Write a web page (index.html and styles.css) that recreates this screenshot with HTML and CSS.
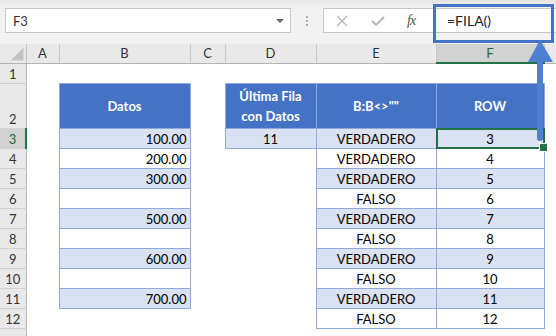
FILE: index.html
```html
<!DOCTYPE html>
<html lang="es">
<head>
    <meta charset="UTF-8">
    <title>FILA - Última fila con datos</title>
    <link rel="stylesheet" href="styles.css">
</head>
<body>
    <div class="app">
        <div class="formula-bar">
            <div class="name-box"><span>F3</span><span class="caret"></span></div>
            <div class="grip">
                <svg width="2" height="10" viewBox="0 0 2 10"><rect y="0" width="2" height="2" fill="#b0b0b0"/><rect y="4" width="2" height="2" fill="#b0b0b0"/><rect y="8" width="2" height="2" fill="#b0b0b0"/></svg>
            </div>
            <div class="fx-area">
                <div class="fx-buttons">
                    <svg class="icon" width="14" height="12" viewBox="0 0 14 12"><path d="M2 1 L12 11 M12 1 L2 11" stroke="#b4b4b4" stroke-width="1.3" fill="none"/></svg>
                    <svg class="icon" width="14" height="12" viewBox="0 0 14 12"><path d="M1 6 L5 10 L13 2" stroke="#b4b4b4" stroke-width="1.8" fill="none"/></svg>
                    <span class="fx">fx</span>
                </div>
                <div class="formula-input"><span>=FILA()</span></div>
            </div>
        </div>

        <table class="sheet">
            <colgroup>
                <col style="width:26px"><col style="width:33px"><col style="width:131px"><col style="width:35px">
                <col style="width:91px"><col style="width:120px"><col style="width:108px"><col style="width:60px">
            </colgroup>
            <tr class="hdr">
                <th class="corner"><span class="tri"></span></th>
                <th class="ch">A</th><th class="ch">B</th><th class="ch">C</th><th class="ch">D</th>
                <th class="ch">E</th><th class="ch on">F</th><th class="ch"></th>
            </tr>
            <tr><th class="rh">1</th><td></td><td></td><td></td><td></td><td></td><td></td><td></td></tr>
            <tr class="tall">
                <th class="rh">2</th><td></td>
                <td class="t th">Datos</td><td></td>
                <td class="t th">Última Fila<br>con Datos</td>
                <td class="t th">B:B&lt;&gt;""</td>
                <td class="t th">ROW</td><td></td>
            </tr>
            <tr>
                <th class="rh on">3</th><td></td>
                <td class="t band num">100.00</td><td></td>
                <td class="t band mid">11</td>
                <td class="t band mid">VERDADERO</td>
                <td class="t band mid sel">3</td><td></td>
            </tr>
            <tr><th class="rh">4</th><td></td><td class="t num">200.00</td><td></td><td></td><td class="t mid">VERDADERO</td><td class="t mid">4</td><td></td></tr>
            <tr><th class="rh">5</th><td></td><td class="t band num">300.00</td><td></td><td></td><td class="t band mid">VERDADERO</td><td class="t band mid">5</td><td></td></tr>
            <tr><th class="rh">6</th><td></td><td class="t num"></td><td></td><td></td><td class="t mid">FALSO</td><td class="t mid">6</td><td></td></tr>
            <tr><th class="rh">7</th><td></td><td class="t band num">500.00</td><td></td><td></td><td class="t band mid">VERDADERO</td><td class="t band mid">7</td><td></td></tr>
            <tr><th class="rh">8</th><td></td><td class="t num"></td><td></td><td></td><td class="t mid">FALSO</td><td class="t mid">8</td><td></td></tr>
            <tr><th class="rh">9</th><td></td><td class="t band num">600.00</td><td></td><td></td><td class="t band mid">VERDADERO</td><td class="t band mid">9</td><td></td></tr>
            <tr><th class="rh">10</th><td></td><td class="t num"></td><td></td><td></td><td class="t mid">FALSO</td><td class="t mid">10</td><td></td></tr>
            <tr><th class="rh">11</th><td></td><td class="t band num">700.00</td><td></td><td></td><td class="t band mid">VERDADERO</td><td class="t band mid">11</td><td></td></tr>
            <tr><th class="rh">12</th><td></td><td></td><td></td><td></td><td class="t mid">FALSO</td><td class="t mid">12</td><td></td></tr>
            <tr class="last"><th class="rh"></th><td></td><td></td><td></td><td></td><td></td><td></td><td></td></tr>
        </table>

        <!-- flecha que apunta a la barra de fórmulas -->
        <svg class="arrow" width="30" height="106" viewBox="0 0 30 106">
            <polygon points="14,2 2,24 27,24" fill="#4f7fcf"/>
            <path d="M11 23 H17 V100 Q17 103 14 103 Q11 103 11 100 Z" fill="#4f7fcf"/>
        </svg>
    </div>
</body>
</html>
```

FILE: styles.css
```css
* {
    box-sizing: border-box;
}
body {
    margin: 0;
    background: #fff;
    font-family: Lato, "Liberation Sans", sans-serif;
    color: #000;
}
.app {
    position: relative;
    width: 556px;
    height: 336px;
    overflow: hidden;
}

/* barra de fórmulas */
.formula-bar {
    height: 44px;
    display: flex;
    align-items: flex-start;
    padding: 8px 0 0 5px;
    background: linear-gradient(#e4e4e4 0, #f1f1f1 6px, #f1f1f1 100%);
}
.name-box {
    width: 286px;
    height: 25px;
    flex: none;
    display: flex;
    align-items: center;
    justify-content: space-between;
    padding: 0 6px 0 7px;
    background: #fff;
    border: 1px solid #c6c6c6;
    font-size: 13px;
    color: #333;
}
.caret {
    width: 0;
    height: 0;
    border-left: 4px solid transparent;
    border-right: 4px solid transparent;
    border-top: 4px solid #6a6a6a;
}
.grip {
    width: 32px;
    height: 25px;
    flex: none;
    display: flex;
    align-items: center;
    justify-content: center;
}
.fx-area {
    flex: 1;
    height: 25px;
    display: flex;
    background: #fff;
    border: 1px solid #c6c6c6;
    border-right: none;
}
.fx-buttons {
    width: 111px;
    flex: none;
    display: flex;
    align-items: center;
    gap: 22px;
    padding-left: 11px;
    border-right: 1px solid #d6d6d6;
}
.icon {
    display: block;
}
.fx {
    width: 14px;
    font-family: "Liberation Serif", serif;
    font-style: italic;
    font-size: 14px;
    color: #555;
    letter-spacing: -1px;
}
.formula-input {
    flex: 1;
    position: relative;
    display: flex;
    align-items: center;
    padding-left: 12px;
    font-size: 14px;
    color: #222;
}
.formula-input::after {
    content: "";
    position: absolute;
    left: -2px;
    top: -5px;
    width: 115px;
    height: 33px;
    border: 3px solid #4472c4;
}

/* hoja */
.sheet {
    table-layout: fixed;
    width: 604px;
    border-collapse: collapse;
    font-size: 13px;
}
.sheet tr {
    height: 20px;
}
.sheet tr.hdr {
    height: 19px;
}
.sheet tr.tall {
    height: 45px;
}
.sheet td,
.sheet th {
    padding: 0;
    white-space: nowrap;
    overflow: hidden;
}
.sheet .corner {
    position: relative;
    background: #e9e9e9;
    border-right: 1px solid #c4c4c4;
    border-bottom: 1px solid #b5b5b5;
}
.tri {
    position: absolute;
    right: 2px;
    bottom: 2px;
    width: 13px;
    height: 13px;
    background: #c3c3c3;
    clip-path: polygon(100% 0, 100% 100%, 0 100%);
}
.sheet .ch {
    background: #e9e9e9;
    border-right: 1px solid #c8c8c8;
    border-bottom: 1px solid #b5b5b5;
    font-weight: normal;
    color: #333;
    text-align: center;
    vertical-align: middle;
}
.sheet .ch.on {
    background: #d2d2d2;
    color: #1f6b3d;
    border-bottom: 2px solid #217346;
}
.sheet .rh {
    background: #e9e9e9;
    border-right: 1px solid #b5b5b5;
    border-bottom: 1px solid #d2d2d2;
    font-weight: normal;
    color: #333;
    text-align: center;
    vertical-align: bottom;
    padding-bottom: 1px;
}
.sheet .rh.on {
    background: #d2d2d2;
    color: #1f6b3d;
    border-right: 2px solid #217346;
}

/* tablas */
.sheet .t {
    border: 1px solid #8ea9db;
    vertical-align: bottom;
    padding-bottom: 1px;
}
.sheet .t.th {
    background: #4472c4;
    color: #fff;
    font-weight: bold;
    text-align: center;
    vertical-align: middle;
    line-height: 20px;
    padding: 0;
}
.sheet .band {
    background: #d9e1f2;
}
.sheet .num {
    text-align: right;
    padding-right: 3px;
}
.sheet .mid {
    text-align: center;
}
.sheet .sel {
    position: relative;
    overflow: visible;
}
.sheet .sel::after {
    content: "";
    position: absolute;
    inset: -1px;
    border: 2px solid #217346;
}
.sheet .sel::before {
    content: "";
    position: absolute;
    right: -4px;
    bottom: -4px;
    width: 7px;
    height: 7px;
    background: #217346;
    border: 1px solid #fff;
    z-index: 1;
}

.arrow {
    position: absolute;
    left: 526px;
    top: 38px;
}
```
